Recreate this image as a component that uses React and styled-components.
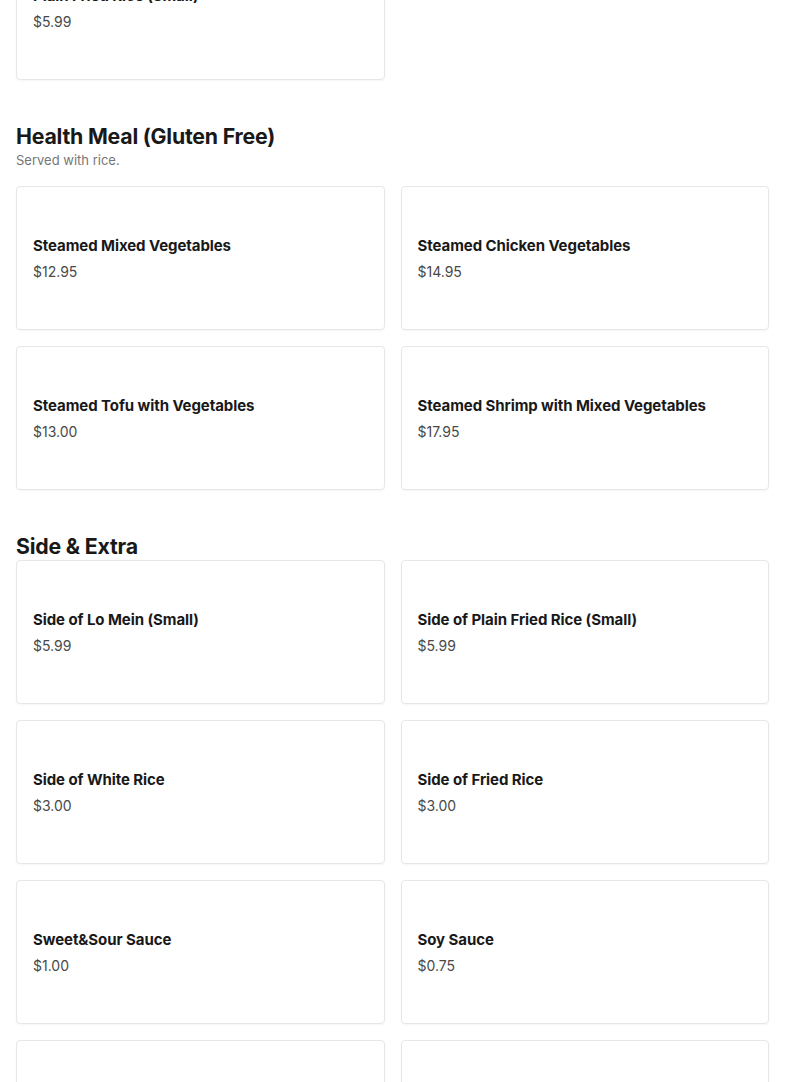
import styled, { createGlobalStyle } from 'styled-components';

const GlobalStyle = createGlobalStyle`
  body {
    margin: 0;
    background: #ffffff;
    font-family: Inter, "Liberation Sans", sans-serif;
    color: #191919;
  }
`;

const Page = styled.main`
  margin-top: -64px;
  padding: 0 16px;
  display: flex;
  flex-direction: column;
  gap: 40px;
`;

const Section = styled.section`
  display: flex;
  flex-direction: column;
`;

const Heading = styled.h2`
  margin: 0;
  padding-top: 2px;
  font-size: 21.3px;
  line-height: 28px;
  font-weight: 700;
  letter-spacing: -0.01em;
  color: #191919;
`;

const Subtitle = styled.p`
  margin: 0;
  padding-top: 1px;
  font-size: 13px;
  line-height: 19px;
  color: #767676;
`;

const Grid = styled.div`
  display: grid;
  grid-template-columns: 1fr 1fr;
  gap: 16px;
  margin-top: ${(props) => (props.spaced ? '16px' : '0')};
`;

const Card = styled.div`
  height: 144px;
  box-sizing: border-box;
  border: 1px solid #e7e7e7;
  border-radius: 4px;
  box-shadow: 0 1px 2px rgba(0, 0, 0, 0.04);
  padding: 2px 16px 0;
  display: flex;
  flex-direction: column;
  justify-content: center;
  gap: 6px;
  cursor: pointer;
`;

const Title = styled.span`
  font-size: 15px;
  line-height: 20px;
  font-weight: 700;
  letter-spacing: -0.005em;
  color: #191919;
`;

const Price = styled.span`
  font-size: 14px;
  line-height: 20px;
  color: #494949;
`;

const menu = [
  {
    items: [{ name: 'Plain Fried Rice (Small)', price: '$5.99' }],
  },
  {
    title: 'Health Meal (Gluten Free)',
    subtitle: 'Served with rice.',
    items: [
      { name: 'Steamed Mixed Vegetables', price: '$12.95' },
      { name: 'Steamed Chicken Vegetables', price: '$14.95' },
      { name: 'Steamed Tofu with Vegetables', price: '$13.00' },
      { name: 'Steamed Shrimp with Mixed Vegetables', price: '$17.95' },
    ],
  },
  {
    title: 'Side & Extra',
    items: [
      { name: 'Side of Lo Mein (Small)', price: '$5.99' },
      { name: 'Side of Plain Fried Rice (Small)', price: '$5.99' },
      { name: 'Side of White Rice', price: '$3.00' },
      { name: 'Side of Fried Rice', price: '$3.00' },
      { name: 'Sweet&Sour Sauce', price: '$1.00' },
      { name: 'Soy Sauce', price: '$0.75' },
      { name: 'Duck Sauce', price: '$0.75' },
      { name: 'Hot Mustard', price: '$0.75' },
    ],
  },
];

const App = () => {
  return (
    <>
      <GlobalStyle />
      <Page>
        {menu.map((section, i) => (
          <Section key={i}>
            {section.title && <Heading>{section.title}</Heading>}
            {section.subtitle && <Subtitle>{section.subtitle}</Subtitle>}
            <Grid spaced={!!section.subtitle}>
              {section.items.map((item) => (
                <Card key={item.name}>
                  <Title>{item.name}</Title>
                  <Price>{item.price}</Price>
                </Card>
              ))}
            </Grid>
          </Section>
        ))}
      </Page>
    </>
  );
};

export default App;
